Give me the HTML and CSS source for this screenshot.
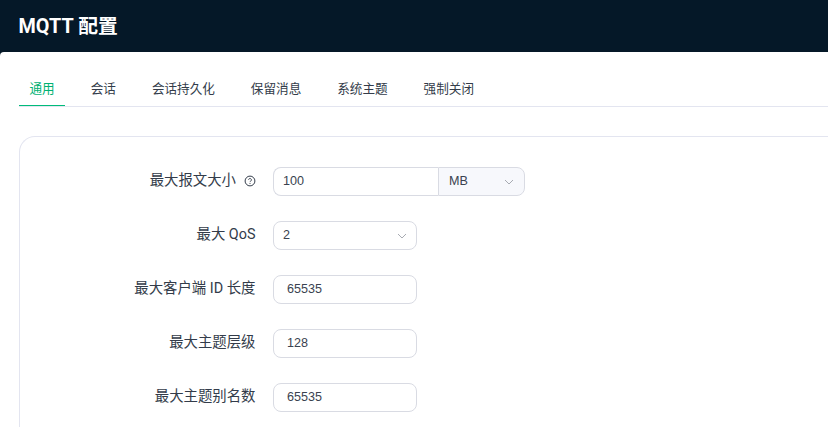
FILE: index.html
```html
<!DOCTYPE html>
<html lang="zh">
<head>
<meta charset="utf-8">
<title>MQTT 配置</title>
<link rel="stylesheet" href="styles.css">
</head>
<body>
<header class="topbar"><h1 class="title">MQTT 配置</h1></header>
<main class="content">
  <nav class="tabs">
    <a class="tab active">通用</a>
    <a class="tab">会话</a>
    <a class="tab">会话持久化</a>
    <a class="tab">保留消息</a>
    <a class="tab">系统主题</a>
    <a class="tab">强制关闭</a>
  </nav>
  <section class="card">
    <div class="row">
      <label class="label"><span class="label-text">最大报文大小</span><svg class="help" viewBox="0 0 12 12" width="12" height="12"><circle cx="6" cy="6" r="4.9" fill="none" stroke="#333c4a" stroke-width="1"/><path d="M4.6 4.9a1.4 1.4 0 1 1 2.2 1.1c-.5.35-.8.6-.8 1.1" fill="none" stroke="#333c4a" stroke-width=".9"/><circle cx="6" cy="8.5" r=".55" fill="#333c4a"/></svg></label>
      <div class="group">
        <div class="field group-input"><span class="value">100</span></div>
        <div class="field group-select"><span class="value">MB</span><svg class="chev" viewBox="0 0 10 10" width="10" height="10"><path d="M1 3l4 4 4-4" fill="none" stroke="#a8abb2" stroke-width="1"/></svg></div>
      </div>
    </div>
    <div class="row">
      <label class="label"><span class="label-text">最大 QoS</span></label>
      <div class="field select"><span class="value">2</span><svg class="chev" viewBox="0 0 10 10" width="10" height="10"><path d="M1 3l4 4 4-4" fill="none" stroke="#a8abb2" stroke-width="1"/></svg></div>
    </div>
    <div class="row">
      <label class="label"><span class="label-text">最大客户端 ID 长度</span></label>
      <div class="field number"><span class="value">65535</span></div>
    </div>
    <div class="row">
      <label class="label"><span class="label-text">最大主题层级</span></label>
      <div class="field number"><span class="value">128</span></div>
    </div>
    <div class="row">
      <label class="label"><span class="label-text">最大主题别名数</span></label>
      <div class="field number"><span class="value">65535</span></div>
    </div>
  </section>
</main>
</body>
</html>
```
FILE: styles.css
```css
* { box-sizing: border-box; }
html, body { margin: 0; height: 100%; overflow: hidden; }
body {
  background: #051828;
  font-family: Roboto, "Noto Sans CJK SC", sans-serif;
  color: #333c4a;
  width: 828px;
  height: 427px;
  display: flex;
  flex-direction: column;
}
.topbar {
  height: 52px;
  flex: none;
  display: flex;
  align-items: center;
  padding: 2px 0 0 18.5px;
}
.title {
  margin: 0;
  color: #fff;
  font-size: 19.8px;
  font-weight: 700;
  line-height: 30px;
}
.content {
  background: #fff;
  flex: 1;
  min-height: 0;
  border-top-left-radius: 4px;
  padding: 22px 0 0 19px;
  display: flex;
  flex-direction: column;
}
.tabs {
  display: flex;
  flex: none;
  gap: 16px;
  height: 33px;
  border-bottom: 1px solid #e3e5f0;
}
.tab {
  padding: 0 10px;
  height: 32px;
  line-height: 30px;
  font-size: 12.6px;
  color: #333c4a;
  margin-left: 0.5px;
  margin-right: -0.5px;
}
.tab.active {
  color: #00b173;
  border-bottom: 1px solid #00bb7a;
  margin-left: 0;
  margin-right: -0.5px;
  padding-left: 10.5px;
}
.card {
  margin-top: 29px;
  flex: 1;
  min-height: 0;
  overflow: hidden;
  border: 1px solid #e3e5f0;
  border-right: 0;
  border-bottom: 0;
  border-top-left-radius: 16px;
  padding-top: 30px;
  display: flex;
  flex-direction: column;
  gap: 25px;
}
.row {
  display: flex;
  flex: none;
  align-items: center;
  height: 29px;
}
.label {
  width: 253px;
  padding-right: 17.5px;
  display: flex;
  justify-content: flex-end;
  align-items: center;
  font-size: 14.4px;
  line-height: 20px;
  color: #333c4a;
  white-space: nowrap;
}
.label-text { margin-top: -1px; }
.help { margin-left: 7.5px; margin-top: -2px; }
.field {
  height: 29px;
  display: flex;
  align-items: center;
  font-family: "Liberation Sans", "Noto Sans CJK SC", sans-serif;
  font-size: 12.6px;
  color: #3a4250;
  border: 1px solid #d9dbe3;
  background: #fff;
}
.value { margin-top: -1px; }
.select, .number {
  width: 144px;
  border-radius: 8px;
}
.select { padding: 0 9px; justify-content: space-between; }
.number { padding: 0 13px; }
.group { display: flex; width: 252px; }
.group-input {
  flex: 1;
  padding: 0 9px;
  border-radius: 8px 0 0 8px;
  border-right: 0;
}
.group-select {
  width: 87px;
  padding: 0 10px 0 10px;
  justify-content: space-between;
  border-radius: 0 8px 8px 0;
  background: #f7f8fc;
}
.chev { flex: none; }
```
